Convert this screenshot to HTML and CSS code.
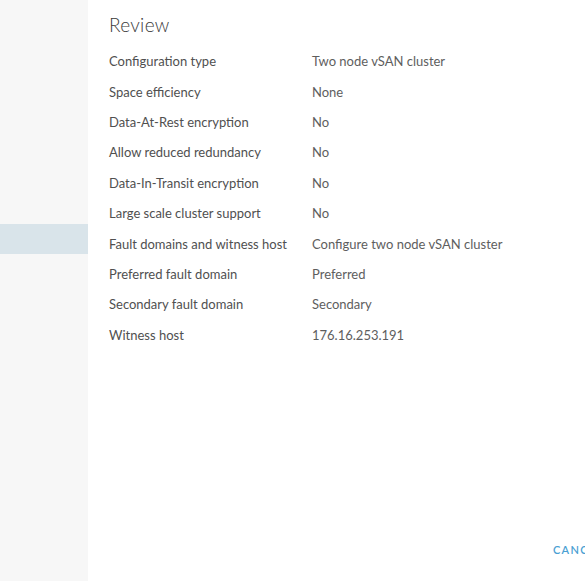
FILE: index.html
```html
<!doctype html>
<html lang="en">

<head>
  <meta charset="UTF-8" />
  <meta name="viewport" content="width=device-width, initial-scale=1.0" />
  <title>Review</title>
  <link rel="stylesheet" href="styles.css">
</head>

<body>
  <div class="wizard">
    <nav class="steps">
      <div class="step"></div>
      <div class="step"></div>
      <div class="step"></div>
      <div class="step"></div>
      <div class="step"></div>
      <div class="step"></div>
      <div class="step"></div>
      <div class="step active"></div>
    </nav>

    <main class="page">
      <h1>Review</h1>
      <table class="review">
        <tbody>
          <tr><td>Configuration type</td><td>Two node vSAN cluster</td></tr>
          <tr><td>Space efficiency</td><td>None</td></tr>
          <tr><td>Data-At-Rest encryption</td><td>No</td></tr>
          <tr><td>Allow reduced redundancy</td><td>No</td></tr>
          <tr><td>Data-In-Transit encryption</td><td>No</td></tr>
          <tr><td>Large scale cluster support</td><td>No</td></tr>
          <tr><td>Fault domains and witness host</td><td>Configure two node vSAN cluster</td></tr>
          <tr><td>Preferred fault domain</td><td>Preferred</td></tr>
          <tr><td>Secondary fault domain</td><td>Secondary</td></tr>
          <tr><td>Witness host</td><td>176.16.253.191</td></tr>
        </tbody>
      </table>

      <div class="footer">
        <button class="btn-link">CANCEL</button>
      </div>
    </main>
  </div>
</body>

</html>
```

FILE: styles.css
```css
body {
  margin: 0;
  font-family: Lato, "Open Sans", sans-serif;
  color: #5e5e5e;
  background-color: #fff;
}

.wizard {
  display: flex;
  height: 581px;
  overflow: hidden;
}

.steps {
  width: 88px;
  flex-shrink: 0;
  background-color: #f7f7f7;
}

.step {
  height: 30px;
}

.step:first-child {
  height: 44px;
}

.step.active {
  background-color: #d9e4ea;
}

.page {
  flex: 1;
  display: flex;
  flex-direction: column;
  padding: 13px 0 0 21px;
  min-width: 0;
}

h1 {
  margin: 0 0 10px;
  font-size: 19px;
  font-weight: 300;
  color: #3a3a3a;
  letter-spacing: 0.3px;
}

.review {
  border-collapse: collapse;
}

.review td {
  padding: 0;
  height: 30.4px;
  font-size: 13px;
  color: #5e5e5e;
  white-space: nowrap;
  vertical-align: middle;
}

.review td:first-child {
  width: 203px;
  color: #505050;
}

.footer {
  margin-top: auto;
  display: flex;
  padding: 0 0 25px 444px;
}

.btn-link {
  border: none;
  background: none;
  padding: 0;
  font-family: inherit;
  font-size: 11px;
  font-weight: 600;
  letter-spacing: 1.3px;
  color: #4a9fd3;
  white-space: nowrap;
}
```
